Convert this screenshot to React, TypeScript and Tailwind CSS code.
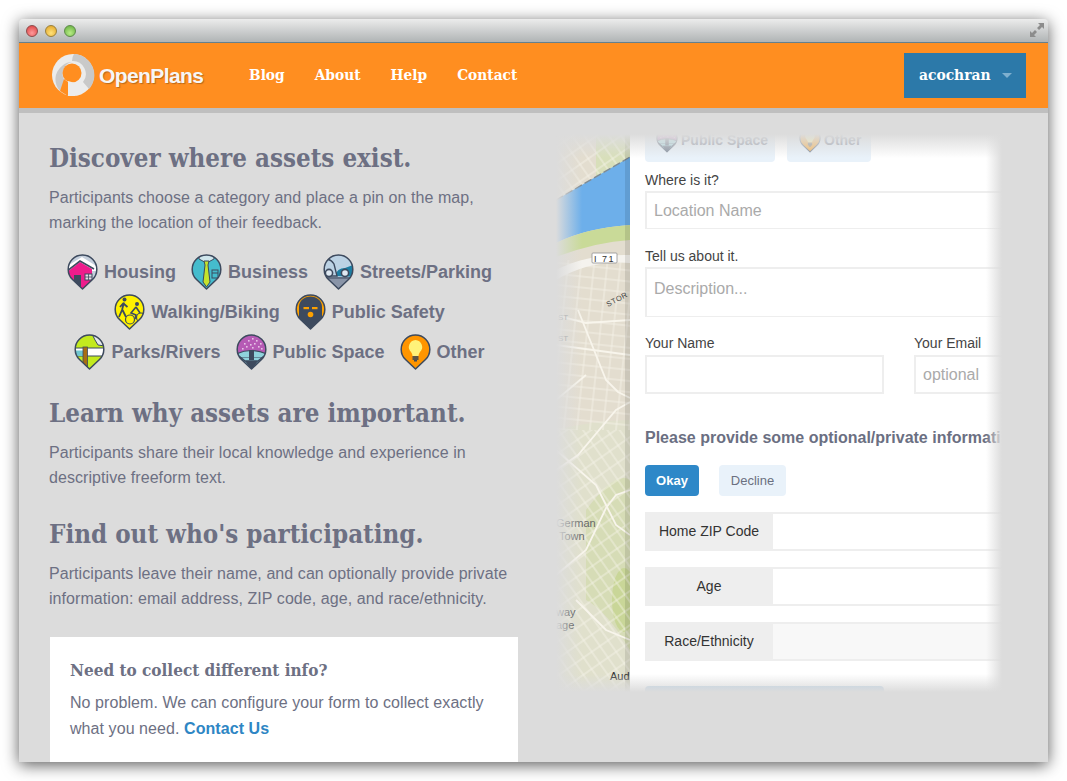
import React, { ReactNode } from "react";

const sans = "font-['Liberation_Sans',Arial,sans-serif]";
const slab = "font-['DejaVu_Serif_Condensed','DejaVu_Serif',serif]";

interface PinProps {
  id: string;
  fill: string;
  size?: number;
  children?: ReactNode;
}

const Pin = ({ id, fill, size = 31, children }: PinProps) => (
  <svg width={size} height={(size * 36) / 31} viewBox="0 0 31 36" className="shrink-0">
    <defs>
      <clipPath id={id}>
        <path d="M15.5 35 L5.5 25.5 A14.3 14.3 0 1 1 25.5 25.5 Z" />
      </clipPath>
    </defs>
    <g clipPath={`url(#${id})`}>
      <rect width="31" height="36" fill={fill} />
      {children}
    </g>
    <path
      d="M15.5 35 L5.5 25.5 A14.3 14.3 0 1 1 25.5 25.5 Z"
      fill="none"
      stroke="#3d4a5e"
      strokeWidth="1.5"
      strokeLinejoin="round"
    />
  </svg>
);

const HousingIcon = () => (
  <Pin id="housing" fill="#c5cfdc">
    <path d="M0 12 L15 3 L31 13 V17 H0Z" fill="#fff" />
    <path d="M0 18 L13 8 L25 15 V36 H0Z" fill="#ee1c8c" />
    <path d="M0 17 L13 7 L27 15" fill="none" stroke="#3d4a5e" strokeWidth="1.6" />
    <rect x="7" y="21" width="7" height="15" fill="#3d4a5e" />
    <rect x="18" y="20" width="7" height="6" fill="#e7dde8" stroke="#3d4a5e" />
    <path d="M21.5 20 V26 M18 23 H25" stroke="#3d4a5e" strokeWidth="0.8" />
  </Pin>
);

const BusinessIcon = () => (
  <Pin id="business" fill="#45bccd">
    <path d="M8 0 H23 V5 L15.5 9 L8 5Z" fill="#cfe6ec" stroke="#3d4a5e" strokeWidth="1" />
    <path d="M13 7 H18 L17 11 L19 28 L15.5 33 L12 28 L14 11Z" fill="#c5e32c" stroke="#3d4a5e" strokeWidth="1" />
    <rect x="21" y="16" width="6" height="8" fill="none" stroke="#3d4a5e" strokeWidth="1" />
    <path d="M21 19 H27" stroke="#3d4a5e" strokeWidth="1" />
  </Pin>
);

const StreetsIcon = () => (
  <Pin id="streets" fill="#bcd2e4">
    <rect y="23" width="31" height="13" fill="#8a95a8" />
    <path d="M12 22 Q14 14 22 14 L33 10 V23 Z" fill="#1d7ea3" />
    <path d="M-2 8 Q6 2 11 10 L14 22 H-2Z" fill="#bcd2e4" stroke="#3d4a5e" strokeWidth="1.4" />
    <circle cx="6" cy="19" r="3.6" fill="#dfe9f2" stroke="#3d4a5e" strokeWidth="1.6" />
    <circle cx="22" cy="19" r="3.6" fill="#dfe9f2" stroke="#3d4a5e" strokeWidth="1.6" />
    <path d="M0 24 H31" stroke="#3d4a5e" strokeWidth="1.2" />
  </Pin>
);

const WalkingIcon = () => (
  <Pin id="walking" fill="#fff200">
    <circle cx="10.5" cy="5.5" r="2" fill="#3d4a5e" />
    <path d="M10 8.5 L8 16 L5 23 M8.5 16 L12 23 M9.5 9 L6 13 M10 10 L13.5 13" fill="none" stroke="#3d4a5e" strokeWidth="1.8" />
    <circle cx="23" cy="10" r="2" fill="#3d4a5e" />
    <path d="M22 13 L17 19 L22 21 L21 25 M22 13 L26 19" fill="none" stroke="#3d4a5e" strokeWidth="1.6" />
    <circle cx="16" cy="25.5" r="4.5" fill="none" stroke="#3d4a5e" strokeWidth="1.2" />
    <circle cx="27" cy="23.5" r="4.5" fill="none" stroke="#3d4a5e" strokeWidth="1.2" />
  </Pin>
);

const SafetyIcon = () => (
  <Pin id="safety" fill="#3d4a5e">
    <path d="M0 0 H31 V24 H27 V13 A11.5 10.5 0 0 0 4 13 V24 H0Z" fill="#fca000" />
    <rect x="8.5" y="13" width="5.5" height="2.2" fill="#fca000" />
    <rect x="17" y="13" width="5.5" height="2.2" fill="#fca000" />
    <circle cx="15.5" cy="20.5" r="2.8" fill="#fca000" />
  </Pin>
);

const ParksIcon = () => (
  <Pin id="parks" fill="#c3ea1e">
    <path d="M18 0 H31 V12 L24 11 L21 6Z" fill="#e4e8ea" stroke="#3d4a5e" strokeWidth="1" />
    <path d="M0 14 H31 V22 H0Z" fill="#fff" stroke="#3d4a5e" strokeWidth="1" />
    <path d="M0 16.5 H9 V22 H0Z" fill="#6fc6cf" />
    <rect x="9" y="13" width="4.5" height="23" fill="#a86e12" stroke="#3d4a5e" strokeWidth="0.8" />
  </Pin>
);

const dots = [
  [8, 9], [12, 6], [16, 4], [20, 6], [24, 9], [10, 12], [14, 10], [18, 9], [22, 12], [6, 14], [16, 13], [25, 14],
];

const SpaceIcon = ({ id = "space", size }: { id?: string; size?: number }) => (
  <Pin id={id} fill="#b65ab5" size={size}>
    {dots.map(([x, y]) => (
      <rect key={`${x}-${y}`} x={x} y={y} width="1.6" height="1.6" fill="#e6c4e6" />
    ))}
    <path d="M0 20 Q15 13 31 20 V24 H0Z" fill="#8fd3dc" stroke="#3d4a5e" strokeWidth="1.2" />
    <path d="M0 24 H31 V36 H0Z" fill="#8fd3dc" />
    <path d="M3 22 L9 27 H22 L28 22" fill="none" stroke="#3d4a5e" strokeWidth="1.4" />
    <rect x="13" y="16" width="5" height="10" fill="#3d4a5e" />
    <path d="M9 27 H22 L15.5 36Z" fill="#3d4a5e" />
  </Pin>
);

const OtherIcon = ({ id = "other", size }: { id?: string; size?: number }) => (
  <Pin id={id} fill="#ff9500" size={size}>
    <path d="M15.5 6 A7 7 0 0 1 20 18 Q18.5 20 18.5 22 H12.5 Q12.5 20 11 18 A7 7 0 0 1 15.5 6Z" fill="#fff27a" />
    <rect x="12.5" y="22" width="6" height="4" fill="#5c5646" />
    <rect x="14" y="26" width="3" height="1.5" fill="#3d4a5e" />
  </Pin>
);

const categoryRows = [
  [
    { label: "Housing", icon: <HousingIcon /> },
    { label: "Business", icon: <BusinessIcon /> },
    { label: "Streets/Parking", icon: <StreetsIcon /> },
  ],
  [
    { label: "Walking/Biking", icon: <WalkingIcon /> },
    { label: "Public Safety", icon: <SafetyIcon /> },
  ],
  [
    { label: "Parks/Rivers", icon: <ParksIcon /> },
    { label: "Public Space", icon: <SpaceIcon /> },
    { label: "Other", icon: <OtherIcon /> },
  ],
];

const Logo = () => (
  <svg width="43" height="43" viewBox="0 0 43 43" className="shrink-0">
    <circle cx="21" cy="21" r="21" fill="#ececec" />
    <path d="M22 0 A21 21 0 0 1 37 35 L31 28 A13 13 0 0 0 20 7 Q20 3 22 0Z" fill="#c9c9c9" />
    <path d="M8 37 A17 17 0 0 1 10 12 Q14 8 20 8 A12 12 0 0 0 14 28Z" fill="#c9c9c9" />
    <circle cx="20" cy="19" r="9.5" fill="#ff8e20" />
    <path d="M12 25 L16 28 V42 L8 37Z" fill="#ff8e20" />
    <path d="M16 27 L23 29 V42 H16Z" fill="#ececec" />
  </svg>
);

const ExpandIcon = () => (
  <svg width="16" height="16" viewBox="0 0 16 16" className="absolute right-[3px] top-[3px]">
    <path d="M9 1 H15 V7 L13 5 L10 8 L8 6 L11 3Z" fill="#8c8c8c" />
    <path d="M7 15 H1 V9 L3 11 L6 8 L8 10 L5 13Z" fill="#8c8c8c" />
  </svg>
);

const roads = [
  "M0 185 L30 193 L74 190",
  "M22 180 L50 250 L62 262 L74 268",
  "M0 340 L22 325 L60 280 L74 272",
  "M0 320 L40 355 L50 375 L60 395 L74 405",
  "M0 445 L30 420 L50 378 L60 365 L74 360",
  "M0 215 L74 225",
  "M30 245 L0 270",
  "M20 470 L50 500 L74 510",
];

const MapStrip = () => (
  <svg width="74" height="562" viewBox="0 0 74 562" className={`shrink-0 ${sans}`}>
    <defs>
      <pattern id="grid-a" width="10" height="14" patternUnits="userSpaceOnUse" patternTransform="rotate(-35)">
        <rect width="10" height="14" fill="none" stroke="#f8f5ec" strokeWidth="1" opacity="0.75" />
      </pattern>
      <pattern id="grid-b" width="13" height="11" patternUnits="userSpaceOnUse" patternTransform="rotate(6)">
        <rect width="13" height="11" fill="none" stroke="#f8f5ec" strokeWidth="1" opacity="0.75" />
      </pattern>
    </defs>
    <rect width="74" height="562" fill="#e3ddcf" />
    <path d="M0 300 Q40 290 74 290 V562 H0Z" fill="#e0e0cc" />
    <path d="M30 380 Q60 340 74 350 V520 Q50 480 30 470Z" fill="#d6dcb6" />
    <ellipse cx="68" cy="470" rx="12" ry="32" fill="#c9d698" />
    <path d="M40 0 L74 0 V28 L40 50Z" fill="#d8dfba" />
    <rect x="0" y="0" width="74" height="90" fill="url(#grid-a)" />
    <rect x="0" y="130" width="74" height="170" fill="url(#grid-b)" />
    <rect x="0" y="300" width="74" height="262" fill="url(#grid-a)" />
    <path d="M0 70 L74 27 V95 Q30 98 0 113Z" fill="#6dafea" />
    <path d="M0 70 L74 27" stroke="#7f8b94" strokeWidth="1.3" strokeDasharray="8 3" />
    <path d="M0 113 Q30 98 74 95 V110 Q40 112 0 127Z" fill="#c9da98" />
    <path d="M0 140 Q30 124 74 125 L74 133 Q34 130 0 150Z" fill="#f5f3ee" />
    {roads.map((d) => (
      <path key={d} d={d} fill="none" stroke="#f8f5ec" strokeWidth="1.8" />
    ))}
    <rect x="36" y="123" width="25" height="10" rx="1" fill="#fff" stroke="#8f8f8f" strokeWidth="0.8" />
    <text x="48.5" y="131.5" fontSize="9" textAnchor="middle" letterSpacing="1.5" fill="#333">I 71</text>
    <text x="52" y="177" fontSize="7.5" fill="#444" transform="rotate(-28 52 177)" letterSpacing="0.6">STOR</text>
    <text x="2" y="190" fontSize="8" fill="#777">ST</text>
    <text x="2" y="211" fontSize="8" fill="#777">ST</text>
    <text x="0" y="397" fontSize="11" fill="#666">German</text>
    <text x="3" y="410" fontSize="11" fill="#666">Town</text>
    <text x="0" y="486" fontSize="11" fill="#333">way</text>
    <text x="0" y="499" fontSize="11" fill="#333">age</text>
    <text x="54" y="550" fontSize="11" fill="#333">Aud</text>
    <rect x="69" width="5" height="562" fill="#000" opacity="0.1" />
  </svg>
);

const InputRow = ({ label, soft }: { label: string; soft?: boolean }) => (
  <div className="flex h-[39px] w-[400px] bg-[#eeeeee]">
    <div className="flex w-[128px] shrink-0 items-center justify-center text-[14px] text-[#333]">{label}</div>
    <div className={`my-[2px] flex-1 ${soft ? "bg-[#f8f8f8]" : "bg-white"}`} />
  </div>
);

const FormPanel = () => (
  <div className="flex-1 overflow-hidden bg-white pl-[15px]">
    <div className="-mt-[12px] flex gap-[12px]">
      <div className="flex h-[44px] w-[130px] items-center gap-[3px] rounded-sm bg-[#e9f2fa] pl-[11px]">
        <div className="opacity-60">
          <SpaceIcon id="chip-space" size={22} />
        </div>
        <span className="whitespace-nowrap text-[14px] font-bold text-[#9aa0ad]">Public Space</span>
      </div>
      <div className="flex h-[44px] w-[84px] items-center gap-[3px] rounded-sm bg-[#e9f2fa] pl-[12px]">
        <div className="opacity-60">
          <OtherIcon id="chip-other" size={22} />
        </div>
        <span className="whitespace-nowrap text-[14px] font-bold text-[#9aa0ad]">Other</span>
      </div>
    </div>
    <p className="mt-[9px] text-[14px] leading-[18px] text-[#444]">Where is it?</p>
    <div className="mt-[2px] flex h-[38px] w-[400px] items-center border-2 border-b border-[#eeeeee] pl-[7px] text-[16px] text-[#aaaaaa]">
      Location Name
    </div>
    <p className="mt-[18px] text-[14px] leading-[18px] text-[#444]">Tell us about it.</p>
    <div className="mt-[2px] h-[50px] w-[400px] border-2 border-b border-[#eeeeee] pl-[7px] pt-[10px] text-[16px] leading-[20px] text-[#aaaaaa]">
      Description...
    </div>
    <div className="mt-[17px] flex gap-[30px]">
      <div className="w-[239px] shrink-0">
        <p className="text-[14px] leading-[18px] text-[#444]">Your Name</p>
        <div className="mt-[3px] h-[39px] border-2 border-[#eeeeee]" />
      </div>
      <div className="w-[200px] shrink-0">
        <p className="text-[14px] leading-[18px] text-[#444]">Your Email</p>
        <div className="mt-[3px] flex h-[39px] items-center border-2 border-[#eeeeee] pl-[7px] text-[16px] text-[#aaaaaa]">
          optional
        </div>
      </div>
    </div>
    <p className="mt-[34px] w-[355px] overflow-hidden whitespace-nowrap text-[16px] font-bold leading-[20px] text-[#6b6f82]">
      Please provide some optional/private information
    </p>
    <div className="mt-[17px] flex gap-[20px]">
      <div className="flex h-[31px] w-[54px] items-center justify-center rounded-sm bg-[#2e88c8] text-[13px] font-bold text-white">
        Okay
      </div>
      <div className="flex h-[31px] w-[67px] items-center justify-center rounded-sm bg-[#e9f2fa] text-[13px] text-[#6b7080]">
        Decline
      </div>
    </div>
    <div className="mt-[16px] flex flex-col gap-[16px]">
      <InputRow label="Home ZIP Code" />
      <InputRow label="Age" />
      <InputRow label="Race/Ethnicity" soft />
    </div>
    <div className="mt-[25px] h-[20px] w-[239px] rounded-sm bg-[#b4d0e8]" />
  </div>
);

export default function App() {
  return (
    <div className={`h-[781px] w-[1067px] overflow-hidden bg-white pb-[19px] pl-[19px] pr-[19px] pt-[19px] ${sans}`}>
      <div className="flex h-[743px] w-[1029px] flex-col overflow-hidden rounded-t-[4px] bg-[#dcdcdc] shadow-[0_3px_16px_rgba(0,0,0,0.65)]">
        <div className="relative flex h-[24px] shrink-0 items-center gap-[7px] border-b border-[#66808c] bg-gradient-to-b from-[#ececec] to-[#b0b4b5] pl-[7px]">
          <span className="h-[12px] w-[12px] rounded-full border border-[#8d4a4a] bg-[radial-gradient(circle_at_50%_70%,#ff9a9a,#d93a3a)]" />
          <span className="h-[12px] w-[12px] rounded-full border border-[#98803c] bg-[radial-gradient(circle_at_50%_70%,#ffe27a,#e0a020)]" />
          <span className="h-[12px] w-[12px] rounded-full border border-[#5d8a4a] bg-[radial-gradient(circle_at_50%_70%,#b8ec86,#62ac3c)]" />
          <ExpandIcon />
        </div>

        <header className="flex h-[65px] shrink-0 items-center justify-between bg-[#ff8e20] pl-[33px] pr-[22px]">
          <div className="flex items-center">
            <div className="flex items-center gap-[4px]">
              <Logo />
              <span className="w-[105px] whitespace-nowrap text-[21px] font-bold tracking-[-0.6px] text-[#f6f6f6] [text-shadow:1px_1px_1px_rgba(120,70,20,0.5)]">
                OpenPlans
              </span>
            </div>
            <nav className={`ml-[45px] flex gap-[30px] text-[15.3px] font-bold text-white ${slab}`}>
              <span>Blog</span>
              <span>About</span>
              <span>Help</span>
              <span>Contact</span>
            </nav>
          </div>
          <div className="flex h-[45px] w-[122px] items-center bg-[#2c79a9] pl-[15px]">
            <span className={`w-[72px] text-[15.4px] font-bold text-white ${slab}`}>acochran</span>
            <span className="ml-[11px] h-0 w-0 border-x-[5px] border-t-[5px] border-x-transparent border-t-[#7fb0cf]" />
          </div>
        </header>
        <div className="h-[5px] shrink-0 bg-[#bfbfbf]" />

        <main className="flex min-h-0 flex-1">
          <section className="w-[537px] shrink-0 overflow-hidden pl-[30px]">
            <h2 className={`mt-[26px] text-[25.7px] font-bold leading-[38px] text-[#6d7083] ${slab}`}>
              Discover where assets exist.
            </h2>
            <p className="mt-[8px] text-[16px] leading-[25px] tracking-[0.07px] text-[#6d7083]">
              Participants choose a category and place a pin on the map,
              <br />
              marking the location of their feedback.
            </p>
            <div className="mt-[19px] flex w-[461px] flex-col gap-[4px]">
              {categoryRows.map((row, i) => (
                <div key={i} className="flex h-[36px] justify-center gap-[15px]">
                  {row.map((cat) => (
                    <div key={cat.label} className="flex items-center gap-[6px]">
                      {cat.icon}
                      <span className="text-[18px] font-bold text-[#6d7083]">{cat.label}</span>
                    </div>
                  ))}
                </div>
              ))}
            </div>
            <h2 className={`mt-[24px] text-[25.7px] font-bold leading-[38px] text-[#6d7083] ${slab}`}>
              Learn why assets are important.
            </h2>
            <p className="mt-[8px] text-[16px] leading-[25px] tracking-[0.07px] text-[#6d7083]">
              Participants share their local knowledge and experience in
              <br />
              descriptive freeform text.
            </p>
            <h2 className={`mt-[25px] text-[25.7px] font-bold leading-[38px] text-[#6d7083] ${slab}`}>
              Find out who's participating.
            </h2>
            <p className="mt-[8px] text-[16px] leading-[25px] tracking-[0.07px] text-[#6d7083]">
              Participants leave their name, and can optionally provide private
              <br />
              information: email address, ZIP code, age, and race/ethnicity.
            </p>
            <div className="ml-[1px] mt-[26px] h-[125px] w-[468px] bg-white pl-[20px] pt-[20px]">
              <h3 className={`text-[17px] font-bold leading-[26px] text-[#6d7083] ${slab}`}>
                Need to collect different info?
              </h3>
              <p className="mt-[7px] text-[16px] leading-[26px] tracking-[0.07px] text-[#6d7083]">
                No problem. We can configure your form to collect exactly
                <br />
                what you need. <span className="font-bold text-[#2e86c4]">Contact Us</span>
              </p>
            </div>
          </section>

          <section className="relative mt-[17px] flex h-[562px] w-[446px] shrink-0 overflow-hidden">
            <MapStrip />
            <FormPanel />
            <div className="absolute inset-x-0 top-0 h-[28px] bg-gradient-to-b from-[#dcdcdc] from-[15%] to-transparent" />
            <div className="absolute inset-x-0 bottom-0 h-[18px] bg-gradient-to-t from-[#dcdcdc] to-transparent" />
            <div className="absolute inset-y-0 left-0 w-[26px] bg-gradient-to-r from-[#dcdcdc] to-transparent" />
            <div className="absolute inset-y-0 right-0 w-[16px] bg-gradient-to-l from-[#dcdcdc] to-transparent" />
          </section>
        </main>
      </div>
    </div>
  );
}
